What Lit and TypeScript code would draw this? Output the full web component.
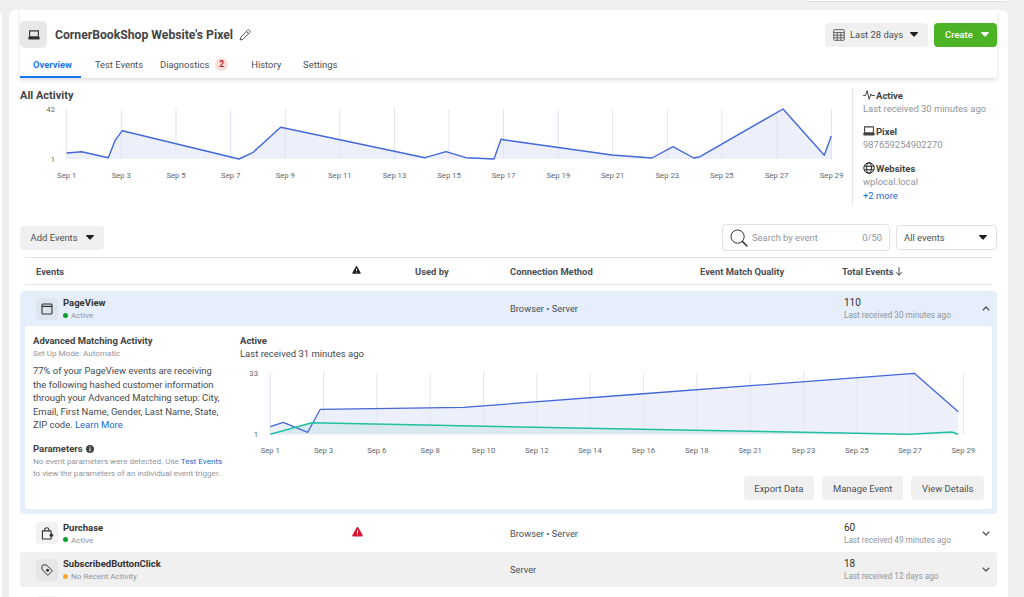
// app.ts
// Pixel overview page: activity chart, event table with one expanded row

import { LitElement, html, svg, css } from 'lit';
import { customElement } from 'lit/decorators.js';

interface Series {
  line: string;
  fill: string;
  width: number;
  points: [number, number][];
}

interface ChartSpec {
  x: number;
  y: number;
  w: number;
  h: number;
  base: number;
  top: number;
  axisX: number;
  max: string;
  labelY: number;
  ticks: [number, string][];
  series: Series[];
}

const activity: ChartSpec = {
  x: 20, y: 100, w: 832, h: 88, base: 159, top: 109, axisX: 55, max: '42', labelY: 178,
  ticks: [
    [66.7, 'Sep 1'], [121.3, 'Sep 3'], [176, 'Sep 5'], [230.7, 'Sep 7'], [285.3, 'Sep 9'],
    [339.8, 'Sep 11'], [394.5, 'Sep 13'], [449, 'Sep 15'], [503.5, 'Sep 17'], [558.3, 'Sep 19'],
    [612.7, 'Sep 21'], [667.3, 'Sep 23'], [721.8, 'Sep 25'], [776.7, 'Sep 27'], [831.5, 'Sep 29'],
  ],
  series: [{
    line: '#4468d8',
    fill: '#edf0fa',
    width: 1.4,
    points: [
      [66.7, 153], [81.7, 151.7], [108.3, 157.7], [115, 140.7], [122.3, 130.7], [239, 159],
      [252.7, 152.7], [280.7, 127.3], [425, 157.7], [446, 151.7], [466, 157.7], [494, 159],
      [501, 139.3], [512, 141], [612, 155], [652, 158], [673, 146.7], [693.7, 158], [700, 156.7],
      [783, 109], [824.3, 155.3], [831.3, 136],
    ],
  }],
};

const pageView: ChartSpec = {
  x: 240, y: 366, w: 744, h: 90, base: 434.3, top: 373, axisX: 258, max: '33', labelY: 453,
  ticks: [
    [270.3, 'Sep 1'], [323.5, 'Sep 3'], [376.8, 'Sep 6'], [430.2, 'Sep 8'], [483.5, 'Sep 10'],
    [536.8, 'Sep 12'], [590, 'Sep 14'], [643.4, 'Sep 16'], [696.8, 'Sep 18'], [750.2, 'Sep 21'],
    [803.5, 'Sep 23'], [856.8, 'Sep 25'], [910, 'Sep 27'], [963.3, 'Sep 29'],
  ],
  series: [
    {
      line: '#4468d8',
      fill: '#edf0fa',
      width: 1.3,
      points: [
        [270.3, 426.7], [283.3, 422.3], [307.7, 432.3], [320.3, 409.3], [463.3, 407.3],
        [640, 394], [914.3, 373.3], [958.3, 411.7],
      ],
    },
    {
      line: '#22bfa3',
      fill: '#d9e9f0',
      width: 1.5,
      points: [
        [270.3, 434.3], [311.7, 422.7], [640, 429.3], [910, 434.3], [951.7, 432], [958.3, 434.3],
      ],
    },
  ],
};

const caret = html`<svg class="caret" viewBox="0 0 8 5"><path d="M.6 0h6.8c.5 0 .7.5.4.9L4.4 4.6c-.2.3-.6.3-.8 0L.2.9C-.1.5.1 0 .6 0z"/></svg>`;

const icons = {
  laptop: html`<svg viewBox="0 0 12 10" width="12" height="10"><path fill="none" stroke="currentColor" stroke-width="1.1" d="M1.6.9h8.8v6H1.6z"/><path fill="currentColor" d="M.3 6.9h11.4v1.6c0 .6-.4 1-1 1H1.3c-.6 0-1-.4-1-1z"/></svg>`,
  pencil: html`<svg viewBox="0 0 12 12" width="12" height="12"><path fill="none" stroke="#444" stroke-width=".9" stroke-linejoin="round" d="M8.6 1.2c.5-.5 1.2-.5 1.7 0l.5.5c.5.5.5 1.2 0 1.7L4 10.2l-2.9.8.8-2.9zM7.4 2.4l2.2 2.2"/></svg>`,
  table: html`<svg viewBox="0 0 12 12" width="12" height="12"><path fill="none" stroke="#555" stroke-width=".9" d="M1.5.7h9c.5 0 .8.3.8.8v9c0 .5-.3.8-.8.8h-9c-.5 0-.8-.3-.8-.8v-9c0-.5.3-.8.8-.8zM.7 3.6h10.6M.7 6.2h10.6M.7 8.8h10.6M4.2 3.6v7.7M7.8 3.6v7.7"/></svg>`,
  pulse: html`<svg viewBox="0 0 12 10" width="12" height="10"><path fill="none" stroke="#333" stroke-width=".9" stroke-linejoin="round" d="M.2 5.5h2.3L4.2.6l1.9 8.7L7.9 4l.8 1.5h3.1"/></svg>`,
  globe: html`<svg viewBox="0 0 12 12" width="12" height="12"><g fill="none" stroke="#222" stroke-width="1"><circle cx="6" cy="6" r="5.2"/><ellipse cx="6" cy="6" rx="2.4" ry="5.2"/><path d="M1.1 4.2h9.8M1.1 7.8h9.8"/></g></svg>`,
  search: html`<svg viewBox="0 0 18 18" width="18" height="18"><g fill="none" stroke="#333" stroke-width="1"><circle cx="7.6" cy="7.6" r="6.6"/></g><path stroke="#333" stroke-width="1.5" stroke-linecap="round" d="M12.6 12.6l4.4 4.4"/></svg>`,
  info: html`<svg viewBox="0 0 8 8" width="8" height="8"><path fill="#444" fill-rule="evenodd" d="M4 0a4 4 0 1 1 0 8 4 4 0 0 1 0-8zM3.5 1.5v1h1v-1zM3.5 3.3v3.2h1V3.3z"/></svg>`,
  warn: html`<svg viewBox="0 0 11 10" width="100%" height="100%"><path fill="currentColor" fill-rule="evenodd" d="M4.7.5c.4-.6 1.2-.6 1.6 0l4.4 7.8c.3.6-.1 1.3-.8 1.3H1.1c-.7 0-1.1-.7-.8-1.3zM5 3v3.4h1V3zM5 7.2v1h1v-1z"/></svg>`,
  window: html`<svg viewBox="0 0 12 12" width="12" height="12"><path fill="none" stroke="#333" stroke-width="1.1" d="M2 1h8c.6 0 1 .4 1 1v8c0 .6-.4 1-1 1H2c-.6 0-1-.4-1-1V2c0-.6.4-1 1-1zM1 3.4h10"/></svg>`,
  bag: html`<svg viewBox="0 0 12 12" width="13" height="13"><path fill="none" stroke="#333" stroke-width="1" stroke-linejoin="round" d="M1.3 3.6h8v7.4h-8zM3.4 3.6V2.3C3.4 1.3 4.2.7 5.3.7s1.9.6 1.9 1.6v1.3"/><circle cx="9.6" cy="7.6" r="1.6" fill="#333"/></svg>`,
  tag: html`<svg viewBox="0 0 12 12" width="12" height="12"><path fill="none" stroke="#333" stroke-width="1" stroke-linejoin="round" d="M1 2.2C1 1.5 1.5 1 2.2 1h3.2l5.4 5.1c.4.4.4 1 0 1.4l-3.3 3.3c-.4.4-1 .4-1.4 0L1 5.4z"/><circle cx="6.6" cy="6.2" r="1.5" fill="#333"/></svg>`,
  arrow: html`<svg viewBox="0 0 8 9" width="8" height="9"><path fill="none" stroke="#444" stroke-width="1" d="M4 .3v8M1 5.2l3 3 3-3"/></svg>`,
  up: html`<svg viewBox="0 0 8 5" width="8" height="5"><path fill="none" stroke="#555" stroke-width="1.3" d="M.8 4.2L4 1l3.2 3.2"/></svg>`,
  down: html`<svg viewBox="0 0 8 5" width="8" height="5"><path fill="none" stroke="#555" stroke-width="1.3" d="M.8.8L4 4l3.2-3.2"/></svg>`,
};

function renderChart(c: ChartSpec) {
  const pts = (p: [number, number][]) => p.map(q => q.join(',')).join(' ');
  return html`
    <svg class="chart" width=${c.w} height=${c.h} viewBox="${c.x} ${c.y} ${c.w} ${c.h}">
      ${c.series.map(s => {
        const first = s.points[0][0];
        const last = s.points[s.points.length - 1][0];
        return svg`<polygon fill=${s.fill} points="${first},${c.base} ${pts(s.points)} ${last},${c.base}"/>`;
      })}
      ${c.ticks.map(([x]) => svg`<line x1=${x} x2=${x} y1=${c.top} y2=${c.base} stroke="#e3e5ee" stroke-width="1"/>`)}
      ${c.series.map(s => svg`<polyline fill="none" stroke=${s.line} stroke-width=${s.width} stroke-linejoin="round" points=${pts(s.points)}/>`)}
      <text class="axis" x=${c.axisX} y=${c.top + 3} text-anchor="end">${c.max}</text>
      <text class="axis" x=${c.axisX} y=${c.base + 3} text-anchor="end">1</text>
      ${c.ticks.map(([x, t]) => svg`<text class="tick" x=${x} y=${c.labelY} text-anchor="middle">${t}</text>`)}
    </svg>
  `;
}

@customElement('app-root')
export class AppRoot extends LitElement {
  static styles = css`
    :host {
      display: block;
      width: 1024px;
      height: 597px;
      overflow: hidden;
      background: #efefef;
      font-family: Roboto, 'Liberation Sans', sans-serif;
      font-size: 9.5px;
      color: #444950;
    }

    svg { display: block; flex: none; }

    .topline {
      height: 10px;
      display: flex;
      justify-content: flex-end;
      padding-right: 17px;
    }
    .topline div {
      width: 201px;
      height: 1px;
      background: #fff;
      border-radius: 0 0 3px 3px;
      box-shadow: 0 1px 0 #ddd;
    }

    .frame { display: flex; height: 587px; padding-right: 16px; }
    .edge { width: 2px; margin-top: 3px; margin-right: 7px; background: #fff; }

    .card {
      width: 999px;
      height: 100%;
      overflow: hidden;
      box-sizing: border-box;
      padding: 0 11px;
      background: #fff;
      border-radius: 6px 6px 0 0;
    }

    .head {
      height: 68px;
      box-sizing: border-box;
      padding-top: 11px;
      box-shadow: 0 2px 4px rgba(0, 0, 0, 0.14);
      clip-path: inset(0 -6px -8px -6px);
      display: flex;
      flex-direction: column;
      justify-content: space-between;
    }
    .head-top { display: flex; align-items: center; height: 27px; }
    .badge-icon {
      width: 27px;
      height: 27px;
      border-radius: 5px;
      background: #e8e8e8;
      color: #333;
      display: flex;
      align-items: center;
      justify-content: center;
      margin-right: 8px;
    }
    h1 { margin: 0 6px 0 0; font-size: 12.2px; font-weight: 700; color: #444; }
    .head-actions { margin-left: auto; display: flex; gap: 6px; }

    .btn {
      height: 24px;
      box-sizing: border-box;
      display: flex;
      align-items: center;
      padding: 0 10.5px;
      border-radius: 4px;
      background: #f0f0f0;
      color: #4b4f56;
      font-size: 9.45px;
      white-space: nowrap;
    }
    .caret { width: 8px; height: 5px; fill: #1c1e21; margin-left: 8px; }
    .date { width: 103px; padding-left: 8px; gap: 5px; }
    .date .caret { margin-left: auto; }
    .create {
      width: 63px;
      padding-left: 11px;
      background: #4cb424;
      color: #fff;
      font-weight: 500;
    }
    .create .caret { fill: #fff; }

    .tabs { display: flex; height: 26px; padding-left: 13px; gap: 22px; }
    .tab {
      position: relative;
      display: flex;
      align-items: center;
      padding-bottom: 2px;
      font-size: 9.4px;
      color: #4b4f56;
      white-space: nowrap;
    }
    .tab.on { margin-right: 1px; color: #1877f2; font-weight: 700; }
    .tab.on::after {
      content: '';
      position: absolute;
      left: -13px;
      right: -9px;
      bottom: 0;
      height: 2px;
      background: #1877f2;
    }
    .tab.diag { margin-left: -5px; margin-right: 1px; }
    .count {
      width: 13px;
      height: 13px;
      margin-left: 6px;
      border-radius: 50%;
      background: #fbdcdb;
      color: #b3262b;
      font-size: 8.5px;
      font-weight: 700;
      display: flex;
      align-items: center;
      justify-content: center;
    }

    .activity { display: flex; height: 116px; margin-top: 10px; }
    .activity-main { width: 832px; }
    h2 { margin: 0; font-size: 11px; line-height: 14px; font-weight: 700; color: #444; }
    .activity-main h2 { padding-top: 1px; margin-bottom: -3px; }
    .tick, .axis { font-size: 7.7px; fill: #606770; }
    .axis { fill: #65676b; }

    .side {
      flex: 1;
      border-left: 1px solid #e4e4e4;
      padding-left: 10px;
    }
    .side-title {
      display: flex;
      align-items: center;
      gap: 1px;
      height: 14px;
      font-size: 9.5px;
      font-weight: 700;
      color: #444;
    }
    .side-text { font-size: 9.45px; line-height: 14px; color: #90949c; }
    .side-block { margin-bottom: 8px; }
    .side-block.wide { margin-bottom: 9px; }
    .side-block.tight { margin-bottom: 0; }
    a { color: #2469d6; text-decoration: none; }

    .toolbar { display: flex; align-items: center; height: 27px; margin-top: 20px; }
    .spacer { flex: 1; }
    .search {
      width: 168px;
      height: 27px;
      box-sizing: border-box;
      display: flex;
      align-items: center;
      padding: 0 7px;
      margin-right: 6px;
      border: 1px solid #e2e2e2;
      border-radius: 4px;
      color: #90949c;
      font-size: 9.4px;
    }
    .search svg { margin-right: 4px; margin-top: 1px; }
    .search .used { margin-left: auto; }
    .select {
      width: 101px;
      height: 25px;
      box-sizing: border-box;
      display: flex;
      align-items: center;
      justify-content: space-between;
      padding: 0 9px 0 7px;
      border: 1px solid #e2e2e2;
      border-radius: 4px;
      font-size: 9.45px;
      color: #4b4f56;
    }

    .grid {
      display: grid;
      grid-template-columns: 314px 65px 95px 190px 142px 1fr;
      align-items: center;
    }
    .thead {
      height: 26px;
      margin: 6px 5px;
      padding-left: 11px;
      border-top: 1px solid #e4e4e4;
      border-bottom: 1px solid #e4e4e4;
      font-size: 9.4px;
      font-weight: 700;
      color: #4b4f56;
    }
    .thead .warn { width: 9px; height: 8px; margin-left: 2px; margin-top: -2px; color: #222; }
    .thead .total { display: flex; align-items: center; gap: 2px; }

    .rows { display: flex; flex-direction: column; gap: 1.5px; }
    .row {
      height: 35px;
      padding-left: 16px;
      border-radius: 4px;
      font-size: 9.3px;
    }
    .row.grey { background: #f0f0f0; }
    .row .who { display: flex; align-items: center; gap: 5px; }
    .ev-icon {
      width: 22px;
      height: 22px;
      border-radius: 4px;
      background: #f2f2f2;
      display: flex;
      align-items: center;
      justify-content: center;
    }
    .row.grey .ev-icon { background: #e6e6e6; }
    .open .ev-icon { background: #dde5f0; }
    .cut { padding: 7px 0 0 16px; }
    .labels { padding-top: 1px; }
    .name { font-size: 9.5px; line-height: 12px; font-weight: 700; color: #333; }
    .status {
      display: flex;
      align-items: center;
      gap: 3px;
      font-size: 8.1px;
      line-height: 12px;
      color: #90949c;
    }
    .dot { width: 5px; height: 5px; border-radius: 50%; background: #0a9e2d; }
    .dot.idle { background: #f7a823; }
    .row .warn { width: 11px; height: 10px; margin-left: 2px; margin-top: -3px; color: #d8152f; }
    .conn { color: #4b4f56; }
    .sum { position: relative; padding: 1px 0 0 2px; }
    .sum b { display: block; font-weight: 400; font-size: 10px; line-height: 12px; color: #333; }
    .sum span { display: block; font-size: 8.2px; line-height: 12px; color: #90949c; }
    .chev { position: absolute; right: 7px; top: 10px; }

    .open { background: #e5eefa; border-radius: 4px; height: 223px; flex: none; }
    .open .row { border-radius: 0; }
    .detail {
      height: 183px;
      margin: 0 5px;
      box-sizing: border-box;
      display: flex;
      padding: 9px 8px 0;
      background: #fff;
      border-radius: 3px;
    }
    .detail-left { width: 207px; flex: none; }
    .detail-right { flex: 1; }
    h3 { margin: 0; font-size: 9.5px; line-height: 12px; font-weight: 700; color: #444; }
    .mode { font-size: 8.1px; line-height: 12px; color: #90949c; }
    .para { width: 191px; margin: 5px 0 0; font-size: 9.45px; line-height: 13.5px; color: #444950; }
    .params { display: flex; align-items: center; gap: 3px; margin-top: 11.5px; }
    .note { width: 194px; margin: 0; font-size: 8.1px; line-height: 12px; color: #90949c; }
    .recv { font-size: 9.5px; line-height: 14px; color: #444950; margin-bottom: 5px; }
    .detail-right .chart { margin-bottom: 20px; }
    .actions { display: flex; justify-content: flex-end; gap: 8.5px; }
  `;

  render() {
    return html`
      <div class="topline"><div></div></div>
      <div class="frame">
        <div class="edge"></div>
        <main class="card">
          <header class="head">
            <div class="head-top">
              <div class="badge-icon">${icons.laptop}</div>
              <h1>CornerBookShop Website's Pixel</h1>
              ${icons.pencil}
              <div class="head-actions">
                <div class="btn date">${icons.table}<span>Last 28 days</span>${caret}</div>
                <div class="btn create">Create${caret}</div>
              </div>
            </div>
            <nav class="tabs">
              <div class="tab on">Overview</div>
              <div class="tab">Test Events</div>
              <div class="tab diag">Diagnostics<span class="count">2</span></div>
              <div class="tab">History</div>
              <div class="tab">Settings</div>
            </nav>
          </header>

          <section class="activity">
            <div class="activity-main">
              <h2>All Activity</h2>
              ${renderChart(activity)}
            </div>
            <aside class="side">
              <div class="side-block">
                <div class="side-title">${icons.pulse}Active</div>
                <div class="side-text">Last received 30 minutes ago</div>
              </div>
              <div class="side-block wide">
                <div class="side-title">${icons.laptop}Pixel</div>
                <div class="side-text">987659254902270</div>
              </div>
              <div class="side-block tight">
                <div class="side-title">${icons.globe}Websites</div>
                <div class="side-text">wplocal.local</div>
                <div class="side-text"><a>+2 more</a></div>
              </div>
            </aside>
          </section>

          <div class="toolbar">
            <div class="btn">Add Events${caret}</div>
            <div class="spacer"></div>
            <div class="search">${icons.search}<span>Search by event</span><span class="used">0/50</span></div>
            <div class="select"><span>All events</span>${caret}</div>
          </div>

          <div class="grid thead">
            <div>Events</div>
            <div class="warn">${icons.warn}</div>
            <div>Used by</div>
            <div>Connection Method</div>
            <div>Event Match Quality</div>
            <div class="total">Total Events ${icons.arrow}</div>
          </div>

          <div class="rows">
            <div class="open">
              ${this.row(icons.window, 'PageView', 'Active', false, false, 'Browser • Server', '110', 'Last received 30 minutes ago', true, false)}
              <div class="detail">
                <div class="detail-left">
                  <h3>Advanced Matching Activity</h3>
                  <div class="mode">Set Up Mode: Automatic</div>
                  <p class="para">77% of your PageView events are receiving the following hashed customer information through your Advanced Matching setup: City, Email, First Name, Gender, Last Name, State, ZIP code. <a>Learn More</a></p>
                  <div class="params"><h3>Parameters</h3>${icons.info}</div>
                  <p class="note">No event parameters were detected. Use <a>Test Events</a> to view the parameters of an individual event trigger.</p>
                </div>
                <div class="detail-right">
                  <h3>Active</h3>
                  <div class="recv">Last received 31 minutes ago</div>
                  ${renderChart(pageView)}
                  <div class="actions">
                    <div class="btn">Export Data</div>
                    <div class="btn">Manage Event</div>
                    <div class="btn">View Details</div>
                  </div>
                </div>
              </div>
            </div>
            ${this.row(icons.bag, 'Purchase', 'Active', false, true, 'Browser • Server', '60', 'Last received 49 minutes ago', false, false)}
            ${this.row(icons.tag, 'SubscribedButtonClick', 'No Recent Activity', true, false, 'Server', '18', 'Last received 12 days ago', false, true)}
            <div class="cut"><div class="ev-icon"></div></div>
          </div>
        </main>
      </div>
    `;
  }

  private row(icon: unknown, name: string, status: string, idle: boolean, warn: boolean,
    conn: string, total: string, last: string, open: boolean, grey: boolean) {
    return html`
      <div class="grid row ${grey ? 'grey' : ''}">
        <div class="who">
          <div class="ev-icon">${icon}</div>
          <div class="labels">
            <div class="name">${name}</div>
            <div class="status"><span class="dot ${idle ? 'idle' : ''}"></span>${status}</div>
          </div>
        </div>
        <div>${warn ? html`<div class="warn">${icons.warn}</div>` : ''}</div>
        <div></div>
        <div class="conn">${conn}</div>
        <div></div>
        <div class="sum">
          <b>${total}</b><span>${last}</span>
          <div class="chev">${open ? icons.up : icons.down}</div>
        </div>
      </div>
    `;
  }
}

declare global {
  interface HTMLElementTagNameMap {
    'app-root': AppRoot;
  }
}
